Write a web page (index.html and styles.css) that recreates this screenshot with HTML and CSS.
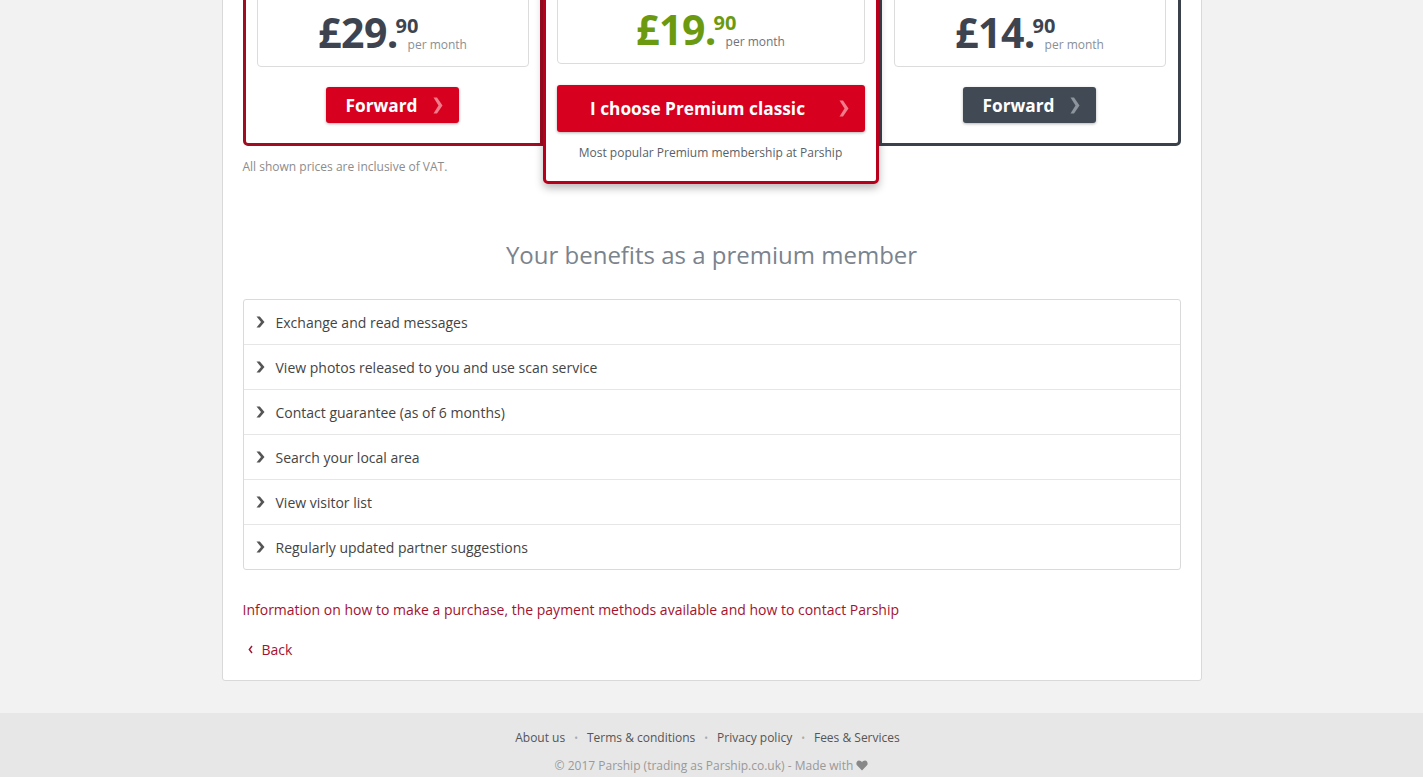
FILE: index.html
```html
<!DOCTYPE html>
<html lang="en">
<head>
  <meta charset="UTF-8">
  <meta name="viewport" content="width=device-width, initial-scale=1.0">
  <title>Parship Premium</title>
  <link rel="stylesheet" href="styles.css">
</head>
<body>

<main class="shop">
  <div class="offers">
    <div class="offer offer-side offer-red">
      <div class="price-box">
        <div class="price">
          <span class="price-main">£29<span class="price-dot">.</span></span>
          <span class="price-side">
            <span class="price-cents">90</span>
            <span class="price-period">per month</span>
          </span>
        </div>
      </div>
      <a class="btn btn-red" href="#">Forward
        <svg class="btn-arrow" width="10" height="17" viewBox="0 0 10 17"><polygon points="0.5,0.5 4,0.5 9.5,8.5 4,16.5 0.5,16.5 5.5,8.5" fill="currentColor"/></svg>
      </a>
    </div>

    <div class="offer offer-top">
      <div class="price-box">
        <div class="price price-green">
          <span class="price-main">£19<span class="price-dot">.</span></span>
          <span class="price-side">
            <span class="price-cents">90</span>
            <span class="price-period">per month</span>
          </span>
        </div>
      </div>
      <a class="btn btn-red btn-wide" href="#">
        <span class="btn-label">I choose Premium classic</span>
        <svg class="btn-arrow" width="10" height="17" viewBox="0 0 10 17"><polygon points="0.5,0.5 4,0.5 9.5,8.5 4,16.5 0.5,16.5 5.5,8.5" fill="currentColor"/></svg>
      </a>
      <p class="offer-note">Most popular Premium membership at Parship</p>
    </div>

    <div class="offer offer-side offer-dark">
      <div class="price-box">
        <div class="price">
          <span class="price-main">£14<span class="price-dot">.</span></span>
          <span class="price-side">
            <span class="price-cents">90</span>
            <span class="price-period">per month</span>
          </span>
        </div>
      </div>
      <a class="btn btn-dark" href="#">Forward
        <svg class="btn-arrow" width="10" height="17" viewBox="0 0 10 17"><polygon points="0.5,0.5 4,0.5 9.5,8.5 4,16.5 0.5,16.5 5.5,8.5" fill="currentColor"/></svg>
      </a>
    </div>
  </div>

  <p class="vat-note">All shown prices are inclusive of VAT.</p>

  <h2 class="benefits-title">Your benefits as a premium member</h2>

  <ul class="benefits">
    <li><svg class="benefit-arrow" width="9" height="12" viewBox="0 0 9 12"><polygon points="0.5,0.5 3.8,0.5 8.5,6 3.8,11.5 0.5,11.5 5,6" fill="currentColor"/></svg>Exchange and read messages</li>
    <li><svg class="benefit-arrow" width="9" height="12" viewBox="0 0 9 12"><polygon points="0.5,0.5 3.8,0.5 8.5,6 3.8,11.5 0.5,11.5 5,6" fill="currentColor"/></svg>View photos released to you and use scan service</li>
    <li><svg class="benefit-arrow" width="9" height="12" viewBox="0 0 9 12"><polygon points="0.5,0.5 3.8,0.5 8.5,6 3.8,11.5 0.5,11.5 5,6" fill="currentColor"/></svg>Contact guarantee (as of 6 months)</li>
    <li><svg class="benefit-arrow" width="9" height="12" viewBox="0 0 9 12"><polygon points="0.5,0.5 3.8,0.5 8.5,6 3.8,11.5 0.5,11.5 5,6" fill="currentColor"/></svg>Search your local area</li>
    <li><svg class="benefit-arrow" width="9" height="12" viewBox="0 0 9 12"><polygon points="0.5,0.5 3.8,0.5 8.5,6 3.8,11.5 0.5,11.5 5,6" fill="currentColor"/></svg>View visitor list</li>
    <li><svg class="benefit-arrow" width="9" height="12" viewBox="0 0 9 12"><polygon points="0.5,0.5 3.8,0.5 8.5,6 3.8,11.5 0.5,11.5 5,6" fill="currentColor"/></svg>Regularly updated partner suggestions</li>
  </ul>

  <a class="info-link" href="#">Information on how to make a purchase, the payment methods available and how to contact Parship</a>

  <a class="back-link" href="#">
    <svg width="5" height="9" viewBox="0 0 5 9"><path d="M4 1 L1.3 4.5 L4 8" fill="none" stroke="currentColor" stroke-width="1.4"/></svg>
    Back
  </a>
</main>

<footer class="footer">
  <nav class="footer-links">
    <a href="#">About us</a>
    <span class="dot">•</span>
    <a href="#">Terms &amp; conditions</a>
    <span class="dot">•</span>
    <a href="#">Privacy policy</a>
    <span class="dot">•</span>
    <a href="#">Fees &amp; Services</a>
  </nav>
  <p class="copyright">© 2017 Parship (trading as Parship.co.uk) - Made with
    <svg width="12" height="11" viewBox="0 0 12 11"><path d="M6 10.5 L1.2 5.6 C-0.4 3.9 0.4 0.6 3 0.5 C4.4 0.5 5.4 1.3 6 2.3 C6.6 1.3 7.6 0.5 9 0.5 C11.6 0.6 12.4 3.9 10.8 5.6 Z" fill="currentColor"/></svg>
  </p>
</footer>

</body>
</html>
```

FILE: styles.css
```css
* {
  margin: 0;
  padding: 0;
  box-sizing: border-box;
  font-family: 'Open Sans', 'Liberation Sans', sans-serif;
}

body {
  background: #f2f2f2;
  color: #444;
  font-size: 14px;
}

a {
  text-decoration: none;
}

.shop {
  width: 980px;
  margin: -48px auto 0;
  padding: 20px 20px 20px;
  background: #fff;
  border: 1px solid #d9d9d9;
  border-radius: 3px;
  display: flex;
  flex-direction: column;
  align-items: flex-start;
}

/* offers */
.offers {
  width: 100%;
  display: flex;
  align-items: flex-start;
}

.offer {
  background: #fff;
  border: 3px solid #3d4450;
  border-radius: 5px;
  padding: 11px 11px 20px;
  display: flex;
  flex-direction: column;
  align-items: center;
}

.offer-side {
  flex: 0 0 300px;
}

.offer-side:last-child {
  flex-basis: 302px;
  padding: 11px 12px 20px 12px;
}

.offer-red {
  border-color: #a00d21;
  border-radius: 5px 0 0 5px;
}

.offer-dark {
  border-color: #3b414b;
  border-radius: 0 5px 5px 0;
}

.offer-top {
  flex: 0 0 336px;
  position: relative;
  z-index: 1;
  margin: -3px 0 -38px;
  border-color: #b8001d;
  box-shadow: 0 4px 8px rgba(0, 0, 0, 0.28);
}

.price-box {
  width: 100%;
  height: 80px;
  border: 1px solid #dcdcdc;
  border-radius: 4px;
  display: flex;
  justify-content: center;
  align-items: flex-end;
  padding-bottom: 14px;
}

.price {
  display: flex;
  align-items: flex-end;
  color: #3d4450;
}

.price-green {
  color: #6b9a10;
}

.price-main {
  font-size: 41px;
  font-weight: 700;
  line-height: 40px;
  letter-spacing: -0.5px;
}

.price-dot {
  letter-spacing: -4px;
}

.price-side {
  display: flex;
  flex-direction: column;
  align-items: flex-start;
  margin-left: 1px;
}

.price-cents {
  font-size: 20px;
  font-weight: 700;
  line-height: 18px;
}

.price-period {
  font-size: 12px;
  line-height: 14px;
  margin: 3px 0 0 12px;
  color: #8a8f96;
}

.price-green .price-period {
  color: #6e737a;
}

.btn {
  margin-top: 20px;
  height: 36px;
  padding: 0 16px 0 19px;
  border-radius: 3px;
  display: flex;
  align-items: center;
  gap: 15px;
  font-size: 17.3px;
  font-weight: 700;
  color: #fff;
  box-shadow: 0 1px 3px rgba(0, 0, 0, 0.3);
}

.btn-red {
  background: #d7001e;
}

.btn-red .btn-arrow {
  color: #f07b8a;
}

.btn-dark {
  background: #414955;
}

.btn-dark .btn-arrow {
  color: #8e949c;
}

.btn-wide {
  width: 100%;
  height: 47px;
  margin-top: 21px;
  padding: 0 16px 0 0;
  gap: 0;
}

.btn-label {
  flex: 1;
  text-align: center;
}

.offer-note {
  margin-top: 13px;
  font-size: 12px;
  line-height: 16px;
  color: #5a5f66;
}

.vat-note {
  margin-top: 13px;
  font-size: 12px;
  line-height: 16px;
  color: #8c8c8c;
}

/* benefits */
.benefits-title {
  align-self: center;
  margin-top: 64px;
  font-size: 24px;
  line-height: 32px;
  font-weight: 400;
  color: #7b838d;
}

.benefits {
  width: 100%;
  margin-top: 28px;
  list-style: none;
  border: 1px solid #dadada;
  border-radius: 3px;
}

.benefits li {
  height: 45px;
  display: flex;
  align-items: center;
  padding-left: 12px;
  gap: 11px;
  font-size: 14px;
  color: #444;
  border-top: 1px solid #e6e6e6;
}

.benefits li:first-child {
  height: 44px;
  border-top: none;
}

.benefit-arrow {
  color: #555;
  margin-top: -1px;
}

.info-link {
  margin-top: 30px;
  font-size: 14px;
  line-height: 20px;
  color: #a3122f;
}

.back-link {
  margin-top: 20px;
  padding-left: 5px;
  display: flex;
  align-items: center;
  gap: 9px;
  font-size: 14px;
  line-height: 20px;
  color: #a3122f;
}

.back-link svg {
  margin-top: -2px;
}

/* footer */
.footer {
  margin-top: 32px;
  background: #e7e7e7;
  padding: 17px 0 16px;
  text-align: center;
  font-size: 12px;
  line-height: 16px;
}

.footer-links {
  display: flex;
  justify-content: center;
  gap: 9px;
  margin-left: -8px;
}

.footer-links a {
  color: #555;
}

.dot {
  color: #aaa;
  font-size: 10px;
}

.copyright {
  margin-top: 12px;
  color: #999;
}

.copyright svg {
  color: #888;
  vertical-align: -1px;
}
```
